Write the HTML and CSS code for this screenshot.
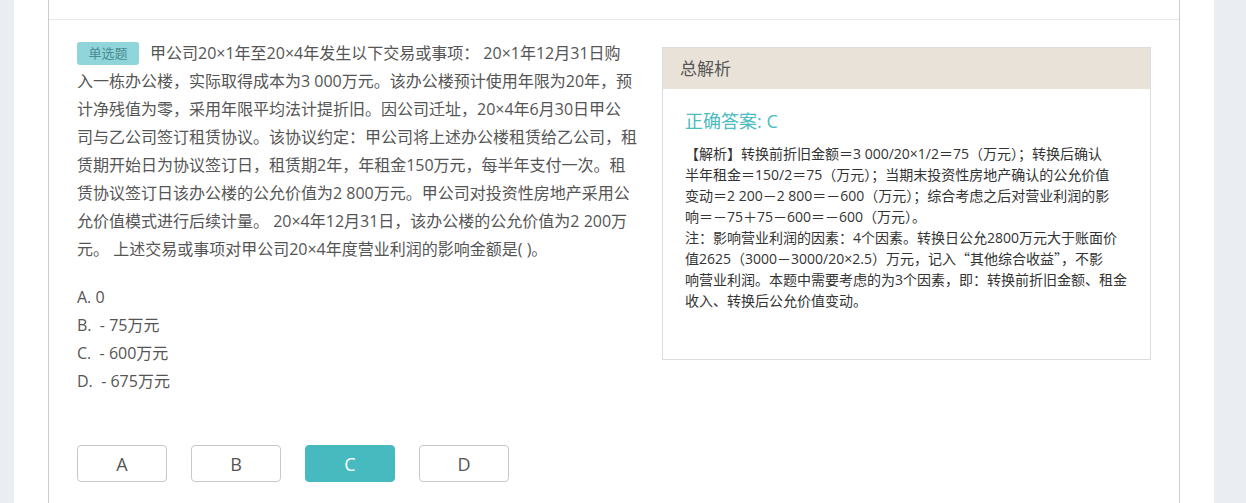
FILE: index.html
```html
<!DOCTYPE html>
<html>
<head>
    <meta charset="utf-8">
    <title>单选题</title>
    <link rel="stylesheet" href="styles.css">
</head>
<body>
    <div class="page">
        <div class="card">
            <div class="card-top"></div>
            <div class="question">
                <div class="main">
                    <!-- line breaks follow the original layout -->
                    <p class="stem"><span class="badge">单选题</span>甲公司20×1年至20×4年发生以下交易或事项： 20×1年12月31日购<br>入一栋办公楼，实际取得成本为3 000万元。该办公楼预计使用年限为20年，预<br>计净残值为零，采用年限平均法计提折旧。因公司迁址，20×4年6月30日甲公<br>司与乙公司签订租赁协议。该协议约定：甲公司将上述办公楼租赁给乙公司，租<br>赁期开始日为协议签订日，租赁期2年，年租金150万元，每半年支付一次。租<br>赁协议签订日该办公楼的公允价值为2 800万元。甲公司对投资性房地产采用公<br>允价值模式进行后续计量。 20×4年12月31日，该办公楼的公允价值为2 200万<br>元。 上述交易或事项对甲公司20×4年度营业利润的影响金额是( )。</p>
                    <ul class="options">
                        <li>A. 0</li>
                        <li>B. &nbsp;- 75万元</li>
                        <li>C. &nbsp;- 600万元</li>
                        <li>D. &nbsp;- 675万元</li>
                    </ul>
                    <div class="answers">
                        <button class="ans">A</button>
                        <button class="ans">B</button>
                        <button class="ans active">C</button>
                        <button class="ans">D</button>
                    </div>
                </div>

                <div class="analysis">
                    <div class="analysis-head">总解析</div>
                    <div class="analysis-body">
                        <div class="right-answer">正确答案: C</div>
                        <p class="explain">【解析】转换前折旧金额＝3 000/20×1/2＝75（万元）；转换后确认<br>半年租金＝150/2＝75（万元）；当期末投资性房地产确认的公允价值<br>变动＝2 200－2 800＝－600（万元）；综合考虑之后对营业利润的影<br>响＝－75＋75－600＝－600（万元）。<br>注：影响营业利润的因素：4个因素。转换日公允2800万元大于账面价<br>值2625（3000－3000/20×2.5）万元，记入<span class="cjk">“</span>其他综合收益<span class="cjk">”</span>，不影<br>响营业利润。本题中需要考虑的为3个因素，即：转换前折旧金额、租金<br>收入、转换后公允价值变动。</p>
                    </div>
                </div>
            </div>
        </div>
    </div>
</body>
</html>
```

FILE: styles.css
```css
* {
    margin: 0;
    padding: 0;
    box-sizing: border-box;
}

body {
    font-family: "Open Sans", "Noto Sans CJK SC", sans-serif;
    background: #eaedf2;
    color: #555;
    height: 503px;
    overflow: hidden;
}

.page {
    width: 1200px;
    margin-left: 14px;
    height: 100%;
    background: #fff;
    padding: 0 34px;
}

.card {
    height: 100%;
    border-left: 1px solid #ccc;
    border-right: 1px solid #ccc;
}

.card-top {
    height: 20px;
    border-bottom: 1px solid #e8e8e8;
}

.question {
    display: grid;
    grid-template-columns: 1fr 489px;
    gap: 20px;
    padding: 19px 28px 0 28px;
}

.stem {
    font-size: 16px;
    line-height: 28px;
    color: #555;
    white-space: nowrap;
}

.badge {
    display: inline-block;
    vertical-align: 1px;
    width: 62px;
    height: 23px;
    line-height: 23px;
    margin-right: 11px;
    border-radius: 3px;
    background: #8fd5d9;
    color: #4b8d92;
    font-size: 13px;
    text-align: center;
}

.options {
    list-style: none;
    margin-top: 20px;
    font-size: 16px;
    line-height: 28px;
    color: #555;
}

.answers {
    display: flex;
    gap: 24px;
    margin-top: 50px;
}

.ans {
    width: 90px;
    height: 37px;
    border: 1px solid #c8c8c8;
    border-radius: 4px;
    background: #fff;
    font-family: "Open Sans", sans-serif;
    font-size: 18px;
    color: #555;
}

.ans.active {
    background: #47babf;
    border-color: #47babf;
    color: #fff;
}

.analysis {
    align-self: start;
    margin-top: 8px;
    border: 1px solid #ddd;
}

.analysis-head {
    height: 41px;
    line-height: 41px;
    padding-left: 17px;
    background: #e8e2d8;
    font-size: 17px;
    color: #555;
}

.analysis-body {
    padding: 19px 14px 48px 22px;
}

.right-answer {
    font-size: 18px;
    line-height: 26px;
    color: #4bbcc0;
}

.explain {
    margin-top: 9px;
    font-size: 14px;
    line-height: 21px;
    color: #333;
    white-space: nowrap;
}

/* full-width quotes like the CJK system font */
.cjk {
    font-family: "Noto Sans CJK SC", sans-serif;
    font-feature-settings: "fwid";
}
```
